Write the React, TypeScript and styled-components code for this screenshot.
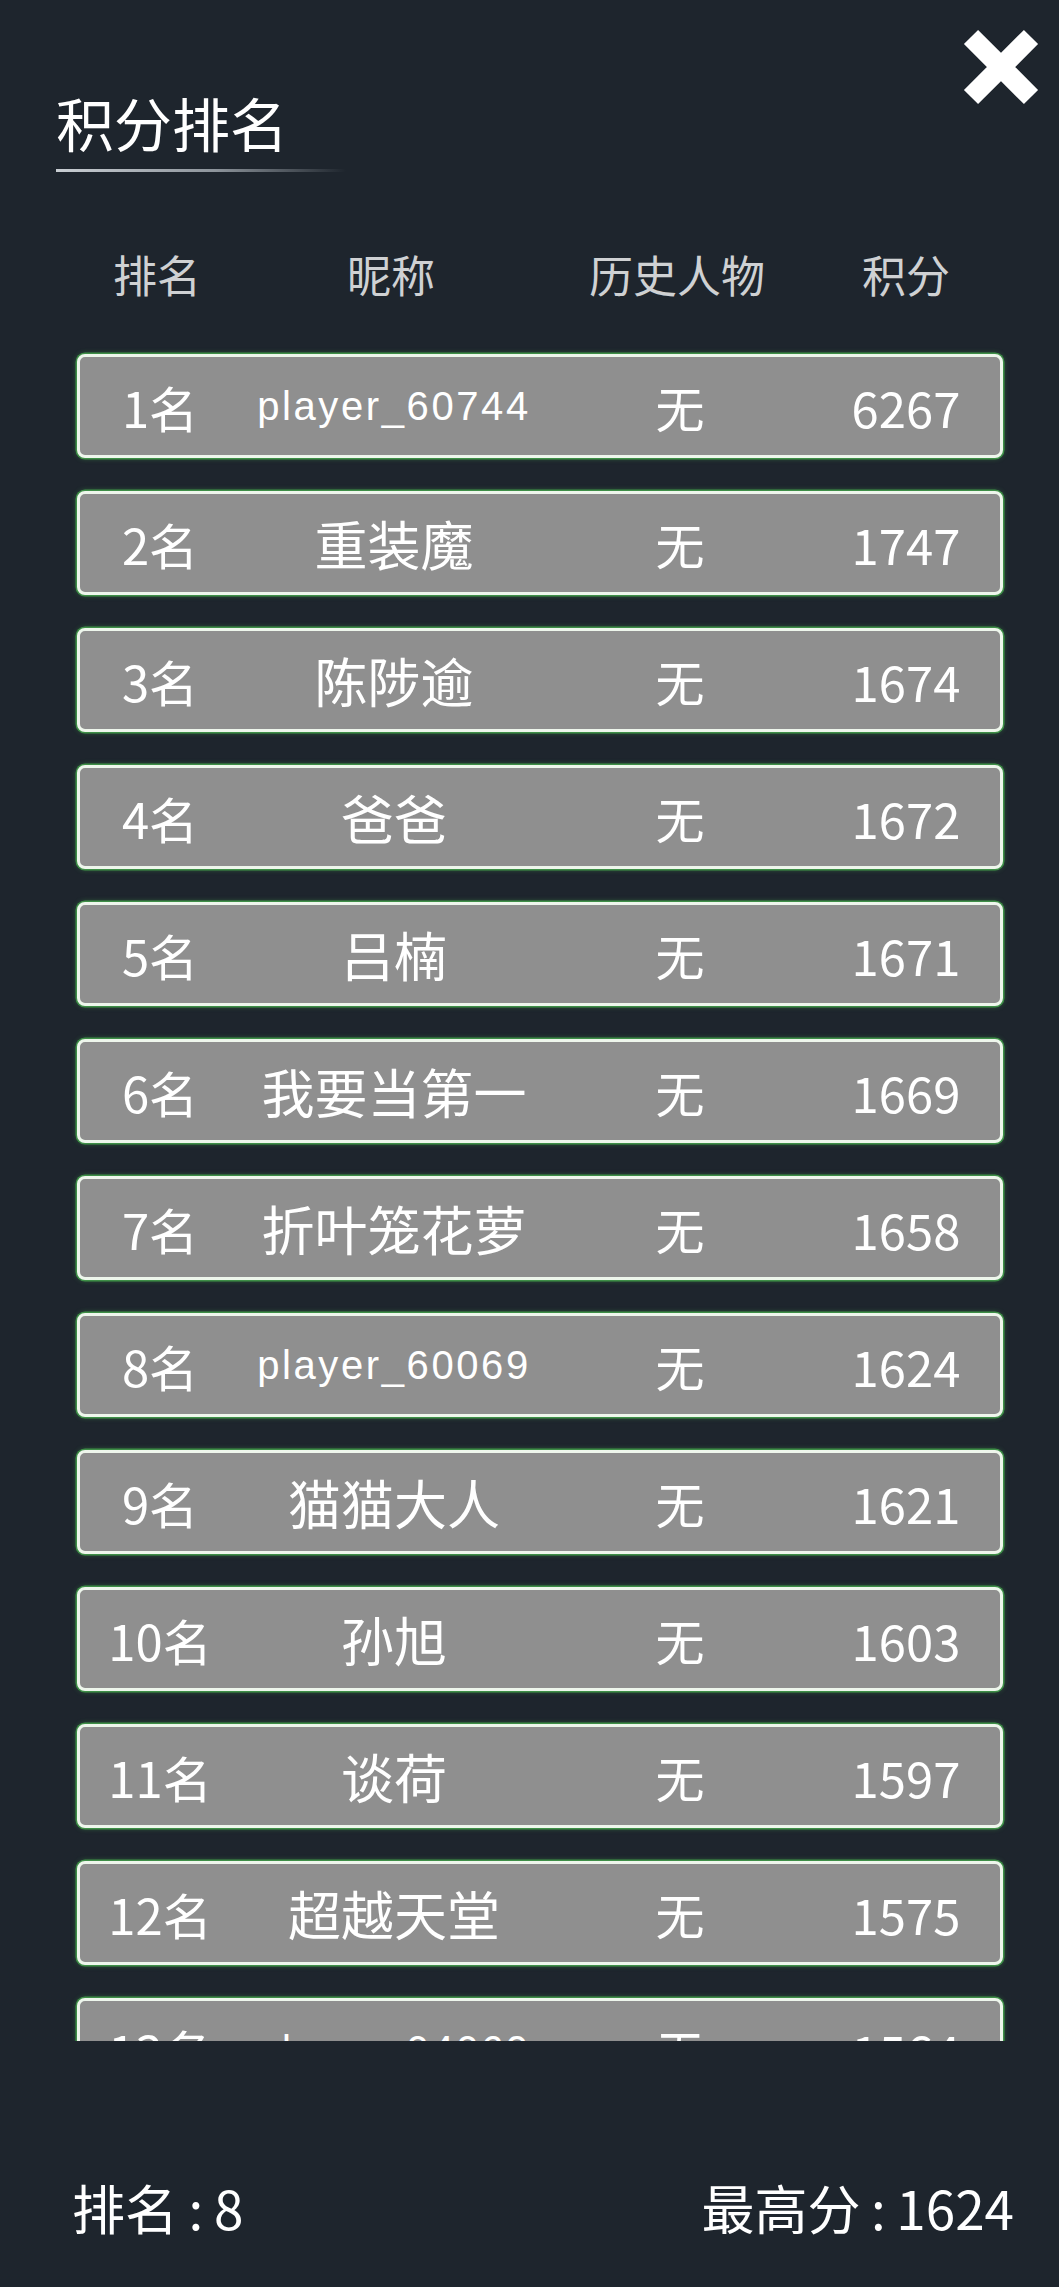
import React, { FC } from 'react';
import styled, { createGlobalStyle } from 'styled-components';

const GlobalStyle = createGlobalStyle`
  html, body {
    margin: 0;
    padding: 0;
    background: #1e252d;
  }
  body {
    font-family: "Noto Sans CJK SC", "Liberation Sans", sans-serif;
  }
`;

const Page = styled.div`
  position: relative;
  width: 1059px;
  height: 2287px;
  overflow: hidden;
  background: #1e252d;
  color: #fff;
`;

const TitleBlock = styled.div`
  padding: 93px 0 0 56px;
`;

const Title = styled.h1`
  margin: 0;
  font-size: 58px;
  line-height: 58px;
  font-weight: 400;
  color: #fff;
`;

const TitleLine = styled.div`
  margin-top: 18px;
  width: 290px;
  height: 3px;
  background: linear-gradient(90deg, #c9ced3 0%, #8d949b 55%, rgba(30, 37, 45, 0) 100%);
`;

const CloseButton = styled.button`
  position: absolute;
  top: 25px;
  right: 16px;
  width: 84px;
  height: 84px;
  padding: 0;
  border: none;
  background: none;
  cursor: pointer;
`;

const Columns = styled.div`
  display: grid;
  grid-template-columns: 160px 308px 264px 1fr;
  align-items: center;
  text-align: center;
`;

const HeaderRow = styled(Columns)`
  margin: 80px 56px 44px 77px;
  font-size: 44px;
  line-height: 44px;
  color: #cfd1d3;
`;

const List = styled.div`
  height: 1687px;
  padding: 14px 56px 0 77px;
  overflow: hidden;
  display: flex;
  flex-direction: column;
  gap: 33px;
`;

const Row = styled(Columns)`
  flex: none;
  height: 104px;
  box-sizing: border-box;
  background: #8f8f8f;
  border: 3px solid #eef6ec;
  border-radius: 8px;
  box-shadow: 0 0 0 1.5px #3e8f47, 0 0 5px 1px rgba(80, 200, 90, 0.35);
  font-size: 49px;
  line-height: 1;
  color: #fff;
`;

const Cell = styled.div`
  white-space: nowrap;
`;

const NameCell = styled(Cell)<{ $latin?: boolean }>`
  font-size: ${(p) => (p.$latin ? '40px' : '53px')};
  ${(p) =>
    p.$latin &&
    `
    font-family: "Liberation Sans", "Noto Sans CJK SC", sans-serif;
    letter-spacing: 2.6px;
  `}
`;

const Footer = styled.div`
  margin-top: 140px;
  padding: 0 45px 0 72px;
  display: flex;
  justify-content: space-between;
  font-size: 53px;
  line-height: 53px;
  color: #fff;
`;

const Stat = styled.span`
  white-space: pre;
`;

type Entry = { rank: number; name: string; hero: string; score: number };

const entries: Entry[] = [
  { rank: 1, name: 'player_60744', hero: '无', score: 6267 },
  { rank: 2, name: '重装魔', hero: '无', score: 1747 },
  { rank: 3, name: '陈陟逾', hero: '无', score: 1674 },
  { rank: 4, name: '爸爸', hero: '无', score: 1672 },
  { rank: 5, name: '吕楠', hero: '无', score: 1671 },
  { rank: 6, name: '我要当第一', hero: '无', score: 1669 },
  { rank: 7, name: '折叶笼花萝', hero: '无', score: 1658 },
  { rank: 8, name: 'player_60069', hero: '无', score: 1624 },
  { rank: 9, name: '猫猫大人', hero: '无', score: 1621 },
  { rank: 10, name: '孙旭', hero: '无', score: 1603 },
  { rank: 11, name: '谈荷', hero: '无', score: 1597 },
  { rank: 12, name: '超越天堂', hero: '无', score: 1575 },
  { rank: 13, name: 'player_04069', hero: '无', score: 1564 },
  { rank: 14, name: '小白', hero: '无', score: 1550 },
];

const CloseIcon: FC = () => (
  <svg width="84" height="84" viewBox="0 0 84 84">
    <path d="M12 12 L72 72 M72 12 L12 72" stroke="#fff" strokeWidth="20" strokeLinecap="butt" />
  </svg>
);

const App: FC = () => {
  return (
    <Page>
      <GlobalStyle />
      <TitleBlock>
        <Title>积分排名</Title>
        <TitleLine />
      </TitleBlock>
      <CloseButton aria-label="关闭">
        <CloseIcon />
      </CloseButton>

      <HeaderRow>
        <div>排名</div>
        <div>昵称</div>
        <div>历史人物</div>
        <div>积分</div>
      </HeaderRow>

      <List>
        {entries.map((e) => {
          const latin = /^[\x00-\x7f]+$/.test(e.name);
          return (
            <Row key={e.rank}>
              <Cell>{e.rank}名</Cell>
              <NameCell $latin={latin}>{e.name}</NameCell>
              <Cell>{e.hero}</Cell>
              <Cell>{e.score}</Cell>
            </Row>
          );
        })}
      </List>

      <Footer>
        <Stat>{'排名\u2009:\u20098'}</Stat>
        <Stat>{'最高分\u2009:\u20091624'}</Stat>
      </Footer>
    </Page>
  );
};

export default App;
